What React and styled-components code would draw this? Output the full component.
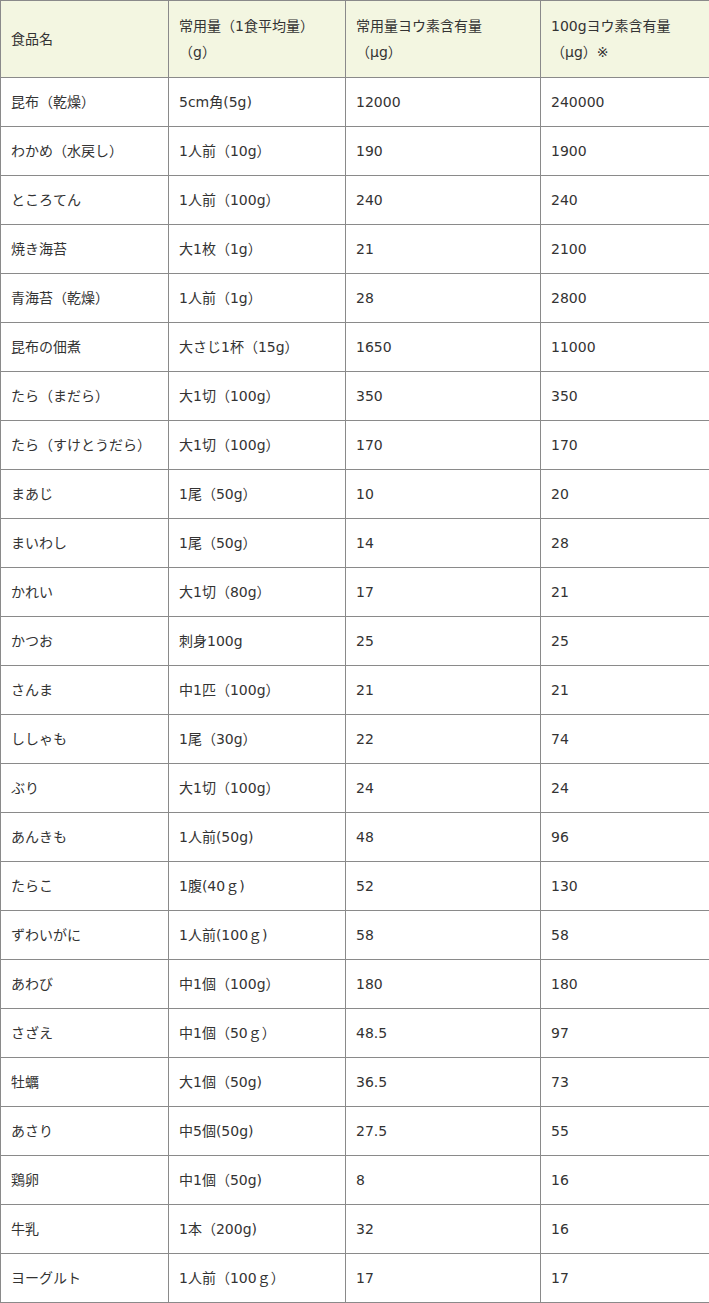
import styled, { createGlobalStyle } from "styled-components";

const GlobalStyle = createGlobalStyle`
  body {
    margin: 0;
    background: #fff;
    font-family: "DejaVu Sans", "Noto Sans CJK JP", sans-serif;
    color: #333;
  }
`;

const Table = styled.table`
  width: 709px;
  border-collapse: collapse;
  table-layout: fixed;
  font-size: 14px;
`;

const Col = styled.col`
  width: ${(p) => p.$w}px;
`;

const HeadCell = styled.th`
  background-color: #f3f6e1;
  border: 1px solid #8a8a8a;
  padding: 12px 10px;
  line-height: 26px;
  font-weight: normal;
  text-align: left;
  vertical-align: middle;
`;

const Cell = styled.td`
  border: 1px solid #8a8a8a;
  padding: 11px 10px;
  height: 26px;
  line-height: 26px;
  text-align: left;
  vertical-align: middle;
  white-space: nowrap;
`;

const rows = [
  ["昆布（乾燥）", "5cm角(5g)", "12000", "240000"],
  ["わかめ（水戻し）", "1人前（10g）", "190", "1900"],
  ["ところてん", "1人前（100g）", "240", "240"],
  ["焼き海苔", "大1枚（1g）", "21", "2100"],
  ["青海苔（乾燥）", "1人前（1g）", "28", "2800"],
  ["昆布の佃煮", "大さじ1杯（15g）", "1650", "11000"],
  ["たら（まだら）", "大1切（100g）", "350", "350"],
  ["たら（すけとうだら）", "大1切（100g）", "170", "170"],
  ["まあじ", "1尾（50g）", "10", "20"],
  ["まいわし", "1尾（50g）", "14", "28"],
  ["かれい", "大1切（80g）", "17", "21"],
  ["かつお", "刺身100g", "25", "25"],
  ["さんま", "中1匹（100g）", "21", "21"],
  ["ししゃも", "1尾（30g）", "22", "74"],
  ["ぶり", "大1切（100g）", "24", "24"],
  ["あんきも", "1人前(50g)", "48", "96"],
  ["たらこ", "1腹(40ｇ)", "52", "130"],
  ["ずわいがに", "1人前(100ｇ)", "58", "58"],
  ["あわび", "中1個（100g）", "180", "180"],
  ["さざえ", "中1個（50ｇ）", "48.5", "97"],
  ["牡蠣", "大1個（50g)", "36.5", "73"],
  ["あさり", "中5個(50g)", "27.5", "55"],
  ["鶏卵", "中1個（50g)", "8", "16"],
  ["牛乳", "1本（200g)", "32", "16"],
  ["ヨーグルト", "1人前（100ｇ）", "17", "17"],
];

const App = () => {
  return (
    <>
      <GlobalStyle />
      <Table>
        <colgroup>
          <Col $w={168} />
          <Col $w={177} />
          <Col $w={195} />
          <Col $w={169} />
        </colgroup>
        <thead>
          <tr>
            <HeadCell>食品名</HeadCell>
            <HeadCell>
              常用量（1食平均量）
              <br />
              （g）
            </HeadCell>
            <HeadCell>
              常用量ヨウ素含有量
              <br />
              （μg）
            </HeadCell>
            <HeadCell>
              100gヨウ素含有量
              <br />
              （μg）※
            </HeadCell>
          </tr>
        </thead>
        <tbody>
          {rows.map((row) => (
            <tr key={row[0] + row[1]}>
              {row.map((value, i) => (
                <Cell key={i}>{value}</Cell>
              ))}
            </tr>
          ))}
        </tbody>
      </Table>
    </>
  );
};

export default App;
